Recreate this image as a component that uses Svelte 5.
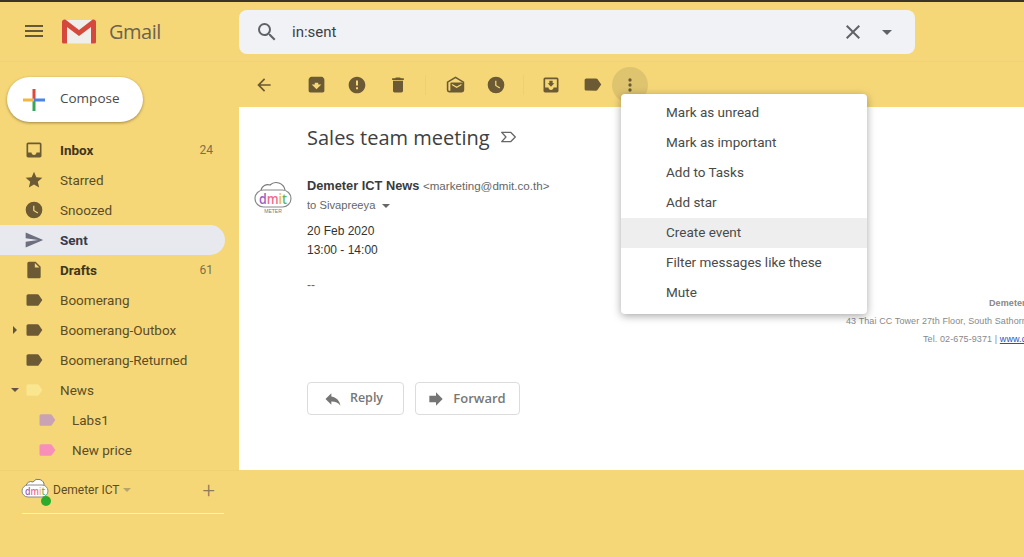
<script>
  const nav = [
    { name: 'Inbox', icon: 'inbox', count: 24, bold: true },
    { name: 'Starred', icon: 'star' },
    { name: 'Snoozed', icon: 'clock' },
    { name: 'Sent', icon: 'send', active: true },
    { name: 'Drafts', icon: 'draft', count: 61, bold: true },
    { name: 'Boomerang', icon: 'label' },
    { name: 'Boomerang-Outbox', icon: 'label', caret: 'right' },
    { name: 'Boomerang-Returned', icon: 'label' },
    { name: 'News', icon: 'label', caret: 'down', color: '#f9e68f' },
    { name: 'Labs1', icon: 'label', sub: true, color: '#c9a3b4' },
    { name: 'New price', icon: 'label', sub: true, color: '#f78fb8' }
  ];

  const menu = ['Mark as unread', 'Mark as important', 'Add to Tasks', 'Add star', 'Create event', 'Filter messages like these', 'Mute'];

  const paths = {
    inbox: 'M19 3H5c-1.1 0-2 .9-2 2v14c0 1.1.9 2 2 2h14c1.1 0 2-.9 2-2V5c0-1.1-.9-2-2-2zm0 12h-4c0 1.66-1.35 3-3 3s-3-1.34-3-3H5V5h14v10z',
    star: 'M12 17.27L18.18 21l-1.64-7.03L22 9.24l-7.19-.61L12 2 9.19 8.63 2 9.24l5.46 4.73L5.82 21z',
    clock: 'M12 2a10 10 0 1 0 0 20 10 10 0 0 0 0-20zm4.2 14.2L11 13V7h1.5v5.2l4.5 2.7-.8 1.3z',
    send: 'M2.01 21L23 12 2.01 3 2 10l15 2-15 2z',
    draft: 'M14 2H6c-1.1 0-2 .9-2 2v16c0 1.1.9 2 2 2h12c1.1 0 2-.9 2-2V8l-6-6zm-1 7V3.5L18.5 9H13z',
    label: 'M17.63 5.84C17.27 5.33 16.67 5 16 5L5 5.01C3.9 5.01 3 5.9 3 7v10c0 1.1.9 1.99 2 1.99L16 19c.67 0 1.27-.33 1.63-.84L22 12l-4.37-6.16z',
    archive: 'M20.54 5.23l-1.39-1.68C18.88 3.21 18.47 3 18 3H6c-.47 0-.88.21-1.16.55L3.46 5.23C3.17 5.57 3 6.02 3 6.5V19c0 1.1.9 2 2 2h14c1.1 0 2-.9 2-2V6.5c0-.48-.17-.93-.46-1.27zM12 17.5L6.5 12H10v-2h4v2h3.5L12 17.5z',
    report: 'M12 2C6.48 2 2 6.48 2 12s4.48 10 10 10 10-4.48 10-10S17.52 2 12 2zm1.2 15h-2.4v-2.4h2.4V17zm0-4.4h-2.4V6.6h2.4v6z',
    trash: 'M6 19c0 1.1.9 2 2 2h8c1.1 0 2-.9 2-2V7H6v12zM19 4h-3.5l-1-1h-5l-1 1H5v2h14V4z',
    move: 'M19 3H5c-1.1 0-2 .9-2 2v14c0 1.1.9 2 2 2h14c1.1 0 2-.9 2-2V5c0-1.1-.9-2-2-2zm0 12h-4c0 1.66-1.35 3-3 3s-3-1.34-3-3H5V5h14v10zm-3-5h-2V7h-4v3H8l4 4 4-4z',
    reply: 'M10 9V5l-7 7 7 7v-4.1c5 0 8.5 1.6 11 5.1-1-5-4-10-11-11z',
    forward: 'M12 8V4l8 8-8 8v-4H4V8z'
  };
</script>

<div class="app">
  <div class="topline"></div>

  <header class="header">
    <div class="brand">
      <svg class="burger" viewBox="0 0 24 24" width="24" height="24"><path d="M3 18h18v-2H3v2zm0-5h18v-2H3v2zm0-7v2h18V6H3z" /></svg>
      <svg class="logo" viewBox="0 0 34 25" width="34" height="25">
        <path d="M1 1h32v22a1.500 1.500 0 0 1-1.500 1.500h-29A1.500 1.500 0 0 1 1 23z" fill="#efeeea" />
        <path d="M0 3c0-2 2-3 4-2l13 10L30 1c2-1 4 0 4 2v20a1.500 1.500 0 0 1-1.500 1.500H29V8L17 17 5 8v16.500H1.500A1.500 1.500 0 0 1 0 23z" fill="#d5483c" />
      </svg>
      <span class="wordmark">Gmail</span>
    </div>
    <div class="search">
      <svg class="s-icon" viewBox="0 0 24 24" width="24" height="24"><path d="M15.500 14h-.79l-.28-.27A6.470 6.470 0 0 0 16 9.500 6.500 6.500 0 1 0 9.500 16c1.610 0 3.090-.59 4.230-1.570l.27.28v.79l5 4.990L20.490 19l-4.990-5zm-6 0C7.010 14 5 11.990 5 9.500S7.010 5 9.500 5 14 7.010 14 9.500 11.990 14 9.500 14z" /></svg>
      <span class="query">in:sent</span>
      <svg class="s-close" viewBox="0 0 24 24" width="24" height="24"><path d="M19 6.410L17.590 5 12 10.590 6.410 5 5 6.410 10.590 12 5 17.590 6.410 19 12 13.410 17.590 19 19 17.590 13.410 12z" /></svg>
      <span class="s-caret"></span>
    </div>
  </header>

  <div class="main">
    <aside class="sidebar">
      <button class="compose">
        <svg viewBox="0 0 24 24" width="24" height="24">
          <rect x="10.500" y="1" width="3" height="11" fill="#e0483c" />
          <rect x="10.500" y="12" width="3" height="11" fill="#34a853" />
          <rect x="1" y="10.500" width="11" height="3" fill="#f5b63f" />
          <rect x="12" y="10.500" width="11" height="3" fill="#4b84e8" />
        </svg>
        <span>Compose</span>
      </button>

      <nav class="nav">
        {#each nav as item}
          <div class="row" class:active={item.active} class:bold={item.bold} class:sub={item.sub}>
            {#if item.caret}<span class="tree {item.caret}"></span>{/if}
            <svg class="row-icon" viewBox="0 0 24 24" width="20" height="20" style:fill={item.color}><path d={paths[item.icon]} /></svg>
            <span class="row-name">{item.name}</span>
            {#if item.count}<span class="count">{item.count}</span>{/if}
          </div>
        {/each}
      </nav>
    </aside>

    <section class="content">
      <div class="toolbar">
        <button class="tool back"><svg viewBox="0 0 24 24" width="20" height="20"><path d="M20 11H7.830l5.590-5.590L12 4l-8 8 8 8 1.410-1.410L7.830 13H20v-2z" /></svg></button>
        <button class="tool first"><svg viewBox="0 0 24 24" width="21" height="21"><path d={paths.archive} /></svg></button>
        <button class="tool"><svg viewBox="0 0 24 24" width="20" height="20"><path d={paths.report} /></svg></button>
        <button class="tool"><svg viewBox="0 0 24 24" width="20" height="20"><path d={paths.trash} /></svg></button>
        <span class="sep one"></span>
        <button class="tool">
          <svg viewBox="0 0 24 24" width="19" height="19">
            <path d="M2 9 12 3l10 6v10a2 2 0 0 1-2 2H4a2 2 0 0 1-2-2z" fill="none" stroke="#6b5a34" stroke-width="2" />
            <rect x="5.500" y="9.500" width="16" height="11.500" rx="1.500" />
            <path d="M7.500 12l6 3.500 6-3.500" fill="none" stroke="#f6d778" stroke-width="1.600" />
          </svg>
        </button>
        <button class="tool"><svg viewBox="0 0 24 24" width="20" height="20"><path d={paths.clock} /></svg></button>
        <span class="sep two"></span>
        <button class="tool"><svg viewBox="0 0 24 24" width="20" height="20"><path d={paths.move} /></svg></button>
        <button class="tool"><svg viewBox="0 0 24 24" width="21" height="21"><path d={paths.label} /></svg></button>
        <button class="tool more"><svg viewBox="0 0 24 24" width="20" height="20"><path d="M12 8a2 2 0 1 0 0-4 2 2 0 0 0 0 4zm0 2a2 2 0 1 0 0 4 2 2 0 0 0 0-4zm0 6a2 2 0 1 0 0 4 2 2 0 0 0 0-4z" /></svg></button>
      </div>

      <div class="pane">
        <h1 class="subject">
          Sales team meeting
          <svg viewBox="0 0 20 16" width="17" height="14"><path d="M2 2.500h10.500L18 8l-5.500 5.500H2L7 8z" fill="none" stroke="#666" stroke-width="1.500" stroke-linejoin="round" /></svg>
        </h1>

        <div class="message">
          <svg class="avatar" viewBox="0 0 40 36" width="40" height="36">
            <path d="M8 10a7 7 0 0 1 9-5 9 9 0 0 1 15 5" fill="none" stroke="#777" stroke-width="1.200" />
            <rect x="2" y="10" width="36" height="17" rx="8.500" fill="#fff" stroke="#8a8a8a" stroke-width="1.200" />
            <text x="6" y="23.500" textLength="28" lengthAdjust="spacingAndGlyphs" class="av-text"><tspan fill="#9b5fc0">d</tspan><tspan fill="#ef6b8a">m</tspan><tspan fill="#f2b63f">i</tspan><tspan fill="#5cb85c">t</tspan></text>
            <text x="20" y="33" text-anchor="middle" class="av-small">METER</text>
          </svg>

          <div class="body">
            <div class="from"><strong>Demeter ICT News</strong> <span>&lt;marketing@dmit.co.th&gt;</span></div>
            <div class="to">to Sivapreeya <span class="mini-caret"></span></div>
            <p class="date">20 Feb 2020<br />13:00 - 14:00</p>
            <p class="dash">--</p>
            <div class="signature">
              <p class="s1">Demeter ICT</p>
              <p class="s2">43 Thai CC Tower 27th Floor, South Sathorn</p>
              <p class="s3">Tel. 02-675-9371 | <a href="#top">www.dmit.co.th</a></p>
            </div>
            <div class="actions">
              <button class="act reply"><svg viewBox="0 0 24 24" width="20" height="20"><path d={paths.reply} /></svg>Reply</button>
              <button class="act forward"><svg viewBox="0 0 24 24" width="20" height="20"><path d={paths.forward} /></svg>Forward</button>
            </div>
          </div>
        </div>
      </div>
    </section>
  </div>

  <footer class="footer">
    <div class="me">
      <svg viewBox="0 0 28 26" width="28" height="26">
        <path d="M5 9a5 5 0 0 1 7-4 6 6 0 0 1 11 4" fill="#fff" stroke="#777" stroke-width="1" />
        <rect x="1" y="8" width="26" height="12" rx="6" fill="#fff" stroke="#8a8a8a" stroke-width="1" />
        <text x="4" y="17.500" textLength="20" lengthAdjust="spacingAndGlyphs" class="me-text"><tspan fill="#9b5fc0">d</tspan><tspan fill="#ef6b8a">m</tspan><tspan fill="#f2b63f">i</tspan><tspan fill="#5cb85c">t</tspan></text>
      </svg>
      <span class="online"></span>
    </div>
    <span class="me-name">Demeter ICT</span>
    <span class="me-caret"></span>
    <span class="plus">+</span>
  </footer>
  <div class="rule"></div>

  <div class="menu">
    {#each menu as entry}
      <div class="menu-item" class:hover={entry === 'Create event'}>{entry}</div>
    {/each}
  </div>
</div>

<style>
  :global(body) {
    margin: 0;
    background: #f6d778;
  }
  .app {
    position: relative;
    height: 557px;
    overflow: hidden;
    background: #f6d778;
    font-family: Roboto, 'Noto Sans', sans-serif;
    color: #5c4d25;
  }
  button {
    font: inherit;
    padding: 0;
    border: none;
    background: none;
  }
  .topline {
    height: 2px;
    background: #3b342a;
  }
  .header {
    display: flex;
    align-items: flex-start;
    height: 60px;
    box-sizing: border-box;
    border-bottom: 1px solid #f1d27a;
  }
  .brand {
    display: flex;
    align-items: center;
    width: 239px;
    height: 58px;
    padding-left: 22px;
    box-sizing: border-box;
  }
  .burger {
    fill: #65593a;
  }
  .logo {
    margin-left: 16px;
  }
  .wordmark {
    margin-left: 13px;
    font-family: 'Open Sans', sans-serif;
    font-size: 20px;
    letter-spacing: -0.5px;
    color: #6b6350;
  }
  .search {
    display: flex;
    align-items: center;
    width: 676px;
    height: 44px;
    margin-top: 8px;
    background: #f1f2f6;
    border-radius: 8px;
  }
  .s-icon {
    margin-left: 16px;
    fill: #5f6368;
  }
  .query {
    margin-left: 13px;
    flex: 1;
    font-size: 15px;
    color: #3c4043;
  }
  .s-close {
    fill: #5f6368;
  }
  .s-caret {
    margin: 0 23px 0 17px;
    border: 5px solid transparent;
    border-top-color: #5f6368;
    border-bottom: none;
  }

  .main {
    display: flex;
    height: 408px;
  }
  .sidebar {
    width: 239px;
    flex: none;
  }
  .compose {
    display: flex;
    align-items: center;
    width: 136px;
    height: 45px;
    margin: 15px 0 13px 7px;
    padding-left: 15px;
    box-sizing: border-box;
    background: #fff;
    border-radius: 23px;
    box-shadow: 0 1px 3px rgba(90, 70, 20, 0.55);
    font-family: 'Open Sans', sans-serif;
    font-size: 13.500px;
    color: #4a4a4a;
  }
  .compose span {
    margin: 0 0 3px 14px;
  }
  .row {
    position: relative;
    display: flex;
    align-items: center;
    width: 225px;
    height: 30px;
    padding: 0 12px 0 24px;
    box-sizing: border-box;
    font-size: 13.500px;
  }
  .row.sub {
    padding-left: 37px;
  }
  .row.bold {
    font-weight: 700;
    color: #40351a;
  }
  .row.active {
    background: #e8e9ef;
    border-radius: 0 15px 15px 0;
    font-weight: 700;
    color: #3a3a4c;
  }
  .row-icon {
    flex: none;
    fill: #6b5a34;
  }
  .active .row-icon {
    fill: #6d6e7e;
  }
  .row-name {
    margin: 0 0 1px 16px;
    flex: 1;
    white-space: nowrap;
  }
  .sub .row-name {
    margin-left: 15px;
  }
  .count {
    font-size: 12px;
    font-weight: 400;
    color: #7c7048;
  }
  .tree {
    position: absolute;
    width: 0;
    height: 0;
    border: 4px solid transparent;
  }
  .tree.right {
    left: 13px;
    top: 11px;
    border-left-color: #5f5540;
    border-right: none;
  }
  .tree.down {
    left: 11px;
    top: 13px;
    border-top-color: #5f5540;
    border-bottom: none;
  }

  .content {
    flex: 1;
    min-width: 0;
    display: flex;
    flex-direction: column;
  }
  .toolbar {
    display: flex;
    align-items: center;
    height: 45px;
    flex: none;
    padding-left: 5px;
  }
  .tool {
    display: flex;
    align-items: center;
    justify-content: center;
    width: 40px;
    height: 36px;
    margin-right: 1px;
  }
  .tool svg {
    fill: #6b5a34;
  }
  .tool.first {
    margin-left: 11px;
  }
  .tool.more {
    width: 36px;
    margin-left: -1px;
    background: #dfc46f;
    border-radius: 50%;
  }
  .sep {
    width: 1px;
    height: 20px;
    background: #edcf74;
  }
  .sep.one {
    margin: 0 9px 0 6px;
  }
  .sep.two {
    margin: 0 7px 0 6px;
  }
  .pane {
    flex: 1;
    min-height: 0;
    overflow: hidden;
    background: #fff;
    color: #222;
  }
  .subject {
    display: flex;
    align-items: center;
    gap: 10px;
    height: 26px;
    margin: 17px 0 0 68px;
    font-size: 20px;
    font-weight: 400;
    font-family: 'Open Sans', sans-serif;
    color: #404040;
    white-space: nowrap;
  }
  .message {
    display: flex;
    margin-top: 26px;
    padding-left: 14px;
  }
  .avatar {
    flex: none;
    margin: 4px 14px 0 0;
  }
  .av-text {
    font-family: 'Open Sans', sans-serif;
    font-size: 15px;
    font-weight: 600;
  }
  .av-small {
    font-family: 'Liberation Sans', sans-serif;
    font-size: 5px;
    fill: #777;
  }
  .body {
    flex: 1;
    min-width: 0;
    white-space: nowrap;
  }
  .from {
    height: 20px;
    line-height: 20px;
    font-family: 'Liberation Sans', sans-serif;
    font-size: 12.800px;
  }
  .from strong {
    color: #3a3a3a;
  }
  .from span {
    font-size: 11.600px;
    color: #666;
  }
  .to {
    height: 18px;
    line-height: 18px;
    font-family: 'Liberation Sans', sans-serif;
    font-size: 11.200px;
    color: #666;
  }
  .mini-caret {
    display: inline-block;
    margin-left: 3px;
    vertical-align: middle;
    border: 4px solid transparent;
    border-top-color: #666;
    border-bottom: none;
  }
  .date,
  .dash {
    margin: 8px 0 0;
    font-family: 'Liberation Sans', sans-serif;
    font-size: 12px;
    line-height: 19px;
    color: #333;
  }
  .dash {
    margin-top: 16px;
    line-height: 18px;
    color: #666;
  }
  .signature {
    font-family: 'Liberation Sans', sans-serif;
    font-size: 9px;
    letter-spacing: 0.1px;
    color: #888;
  }
  .signature p {
    height: 18px;
    margin: 0;
    line-height: 18px;
  }
  .signature .s1 {
    margin-left: 682px;
    font-weight: 700;
  }
  .signature .s2 {
    margin-left: 539px;
  }
  .signature .s3 {
    margin-left: 616px;
  }
  .signature a {
    color: #1a56c4;
  }
  .actions {
    display: flex;
    gap: 11px;
    margin-top: 34px;
  }
  .act {
    display: flex;
    align-items: center;
    justify-content: center;
    gap: 7px;
    height: 33px;
    padding: 0 5px 2px 0;
    box-sizing: border-box;
    border: 1px solid #dcdcdc;
    border-radius: 4px;
    font-family: 'Open Sans', sans-serif;
    font-size: 12.500px;
    font-weight: 600;
    color: #777;
  }
  .act svg {
    fill: #757575;
    margin-top: 2px;
  }
  .reply {
    width: 97px;
  }
  .forward {
    width: 105px;
    padding-right: 3px;
    font-size: 13px;
  }

  .footer {
    display: flex;
    align-items: center;
    width: 239px;
    height: 41px;
    box-sizing: border-box;
    padding: 0 0 2px 21px;
    border-top: 1px solid #efd072;
  }
  .me {
    position: relative;
    width: 28px;
    height: 26px;
  }
  .me-text {
    font-family: 'Open Sans', sans-serif;
    font-size: 10.500px;
    font-weight: 600;
  }
  .online {
    position: absolute;
    left: 20px;
    top: 19px;
    width: 10px;
    height: 10px;
    background: #2cab2c;
    border-radius: 50%;
  }
  .me-name {
    margin-left: 4px;
    font-size: 12px;
    color: #5c4d25;
  }
  .me-caret {
    margin-left: 3px;
    border: 4px solid transparent;
    border-top-color: #b8a468;
    border-bottom: none;
  }
  .plus {
    margin-left: auto;
    margin-right: 24px;
    font-size: 22px;
    font-weight: 300;
    color: #8a7d55;
  }
  .rule {
    width: 202px;
    height: 1px;
    margin: 2px 0 0 22px;
    background: #faf0c8;
  }

  .menu {
    position: absolute;
    left: 621px;
    top: 94px;
    width: 246px;
    height: 220px;
    padding-top: 4px;
    box-sizing: border-box;
    background: #fff;
    border-radius: 4px;
    box-shadow: 0 2px 8px rgba(0, 0, 0, 0.35);
  }
  .menu-item {
    height: 30px;
    line-height: 28px;
    padding-left: 45px;
    font-size: 13.500px;
    color: #4a4a4a;
    white-space: nowrap;
  }
  .menu-item.hover {
    background: #eeeeee;
  }
</style>
